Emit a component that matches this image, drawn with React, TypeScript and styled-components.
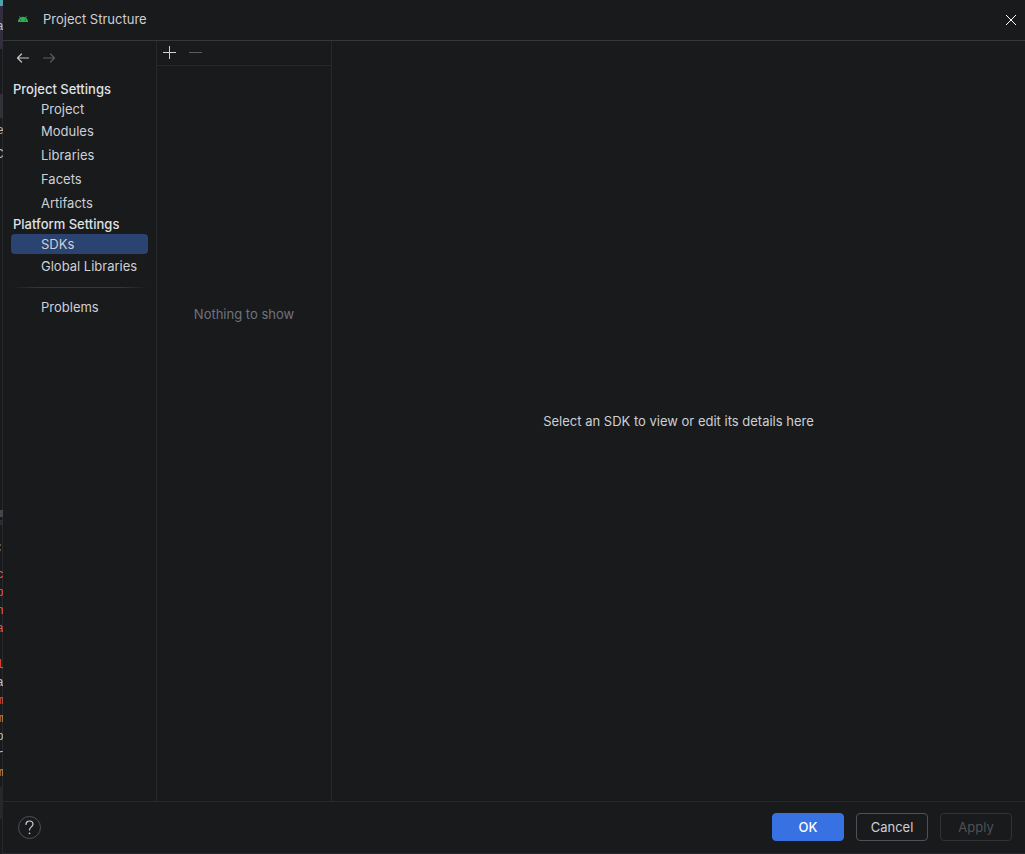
import React from "react";
import styled, { createGlobalStyle, css } from "styled-components";

const GlobalStyle = createGlobalStyle`
  * { box-sizing: border-box; }
  body {
    margin: 0;
    background: #191a1c;
    color: #ced0d6;
    font: 13px/16px Inter, "Liberation Sans", sans-serif;
  }
  button { font: inherit; color: inherit; margin: 0; }
`;

const Screen = styled.div`
  display: flex;
  height: 100vh;
  overflow: hidden;
`;

const Editor = styled.div`
  flex: none;
  display: flex;
  flex-direction: column;
  width: 3px;
  overflow: hidden;
  background: linear-gradient(90deg, #191a1c 2px, #26282b 2px);
  font: 13px/18px "Liberation Mono", monospace;
  text-indent: -4px;
`;

const Block = styled.div<{ $h: number; $bg?: string }>`
  flex: none;
  height: ${(p) => p.$h}px;
  background: ${(p) => p.$bg ?? "transparent"};
`;

const Code = styled.span<{ $color?: string; $bg?: string }>`
  flex: none;
  height: 18px;
  color: ${(p) => p.$color ?? "#bcbec4"};
  background: ${(p) => p.$bg ?? "transparent"};
`;

const Dialog = styled.main`
  flex: 1;
  min-width: 0;
  display: flex;
  flex-direction: column;
`;

const TitleBar = styled.header`
  display: flex;
  align-items: center;
  gap: 14px;
  height: 41px;
  padding: 0 8px 0 14px;
  border-bottom: 1px solid #36373a;
`;

const Title = styled.h1`
  flex: 1;
  margin: 0;
  padding-bottom: 2px;
  font-size: 13px;
  font-weight: 400;
`;

const IconButton = styled.button`
  display: flex;
  padding: 0;
  border: 0;
  background: none;
`;

const Body = styled.div`
  flex: 1;
  min-height: 0;
  display: flex;
`;

const Sidebar = styled.nav`
  width: 154px;
  border-right: 1px solid #27282b;
  padding: 9px 8px;
`;

const History = styled.div`
  display: flex;
  gap: 10px;
  padding: 0 4px 13px;
`;

const Group = styled.section`
  margin-bottom: -1px;
`;

const GroupTitle = styled.h2`
  margin: 0;
  padding-left: 2px;
  font-size: 13px;
  line-height: 20px;
  font-weight: 500;
  color: #dfe1e5;
`;

const NavItem = styled.a<{ $selected?: boolean; $compact?: boolean }>`
  display: flex;
  align-items: center;
  height: ${(p) => (p.$compact ? 20 : 24)}px;
  padding-left: 30px;
  border-radius: 4px;
  color: inherit;
  text-decoration: none;
  white-space: nowrap;
  ${(p) => p.$selected && css`background: #2a4371;`}
`;

const Divider = styled.hr`
  height: 1px;
  margin: 10px 0 7px;
  border: 0;
  background: linear-gradient(90deg, transparent, #36373a 20%, #36373a 80%, transparent);
`;

const SdkPanel = styled.section`
  display: flex;
  flex-direction: column;
  width: 175px;
  border-right: 1px solid #27282b;
`;

const Toolbar = styled.div`
  display: flex;
  align-items: center;
  gap: 10px;
  height: 25px;
  padding: 0 4px 2px;
  border-bottom: 1px solid #27282b;
`;

const EmptyList = styled.p`
  margin: 0;
  padding-top: 240px;
  text-align: center;
  color: #6f737a;
`;

const Details = styled.section`
  flex: 1;
  display: flex;
  align-items: center;
  justify-content: center;
`;

const Footer = styled.footer`
  display: flex;
  align-items: center;
  gap: 12px;
  height: 53px;
  padding: 0 13px 1px 15px;
  border-top: 1px solid #27282b;
  border-bottom: 1px solid #27282b;
`;

const HelpButton = styled.button`
  display: flex;
  align-items: center;
  justify-content: center;
  width: 23px;
  height: 23px;
  margin-right: auto;
  padding: 0;
  border: 1px solid #4e5157;
  border-radius: 50%;
  background: none;
`;

const Button = styled.button<{ $primary?: boolean }>`
  width: 72px;
  height: 28px;
  padding: 0;
  border: 1px solid #4e5157;
  border-radius: 4px;
  background: none;
  ${(p) => p.$primary && css`
    border-color: #3871e1;
    background: #3871e1;
    color: #fff;
    font-weight: 500;
  `}
  &:disabled { border-color: #303236; color: #4e5157; }
`;

const Arrow = ({ forward }: { forward?: boolean }) => (
  <svg width="16" height="16" fill="none" stroke={forward ? "#5a5c61" : "#c4c6cc"} strokeWidth="1.2" strokeLinecap="round" strokeLinejoin="round">
    <path d={forward ? "M2.5 8h11M9.5 4l4 4l-4 4" : "M13.5 8h-11M6.500 4l-4 4l4 4"} />
  </svg>
);

export default function App() {
  return (
    <Screen>
      <GlobalStyle />
      <Editor aria-hidden="true">
        <Block $h={6} $bg="#4fa3ad" />
        <Block $h={12} $bg="#332d40" />
        <Code $bg="#332d40">a</Code>
        <Block $h={13} $bg="#332d40" />
        <Block $h={45} />
        <Block $h={24} $bg="#303237" />
        <Block $h={4} />
        <Code>e</Code>
        <Block $h={6} />
        <Code>C</Code>
        <Block $h={346} />
        <Block $h={7} $bg="#43464a" />
        <Block $h={3} />
        <Block $h={5} $bg="#2b2d30" />
        <Block $h={14} />
        <Code $color="#6f737a">:</Code>
        <Block $h={9} />
        <Code $color="#e05545">c</Code>
        <Code $color="#e05545">p</Code>
        <Code $color="#e05545">n</Code>
        <Code $color="#e05545">a</Code>
        <Block $h={18} />
        <Code $color="#f04a35">l</Code>
        <Code>a</Code>
        <Code $color="#e05545">m</Code>
        <Code $color="#c78a4a">m</Code>
        <Code>p</Code>
        <Code>r</Code>
        <Code $color="#c78a4a">m</Code>
        <Block $h={5} />
        <Block $h={32} $bg="#27282b" />
      </Editor>
      <Dialog>
        <TitleBar>
          <svg width="12" height="12" viewBox="0 1 12 12">
            <path d="M1 9c0-2 .8-3.400 2-4.200L2.200 3.200l.6-.3.9 1.500a5 5 0 0 1 4.600 0l.9-1.500.6.3L9 4.800c1.200.8 2 2.200 2 4.200z" fill="#2fae55" />
            <circle cx="3.700" cy="7" r=".5" fill="#191a1c" />
            <circle cx="8.300" cy="7" r=".5" fill="#191a1c" />
          </svg>
          <Title>Project Structure</Title>
          <IconButton aria-label="Close">
            <svg width="12" height="12" stroke="#fff" shapeRendering="crispEdges">
              <path d="M1 1l10 10M11 1L1 11" />
            </svg>
          </IconButton>
        </TitleBar>
        <Body>
          <Sidebar>
            <History>
              <IconButton aria-label="Back"><Arrow /></IconButton>
              <IconButton aria-label="Forward" disabled><Arrow forward /></IconButton>
            </History>
            <Group>
              <GroupTitle>Project Settings</GroupTitle>
              <NavItem href="#project" $compact>Project</NavItem>
              <NavItem href="#modules">Modules</NavItem>
              <NavItem href="#libraries">Libraries</NavItem>
              <NavItem href="#facets">Facets</NavItem>
              <NavItem href="#artifacts">Artifacts</NavItem>
            </Group>
            <Group>
              <GroupTitle>Platform Settings</GroupTitle>
              <NavItem href="#sdks" $compact $selected>SDKs</NavItem>
              <NavItem href="#global">Global Libraries</NavItem>
            </Group>
            <Divider />
            <NavItem href="#problems">Problems</NavItem>
          </Sidebar>
          <SdkPanel>
            <Toolbar>
              <IconButton aria-label="Add SDK">
                <svg width="16" height="16" stroke="#ced0d6"><path d="M2 8.500h13M8.500 2v13" /></svg>
              </IconButton>
              <IconButton aria-label="Remove SDK" disabled>
                <svg width="16" height="16" stroke="#5a5c60"><path d="M2 8.500h13" /></svg>
              </IconButton>
            </Toolbar>
            <EmptyList>Nothing to show</EmptyList>
          </SdkPanel>
          <Details>Select an SDK to view or edit its details here</Details>
        </Body>
        <Footer>
          <HelpButton aria-label="Help">
            <svg width="15" height="15" fill="none" stroke="#ced0d6" strokeWidth="1.200" strokeLinecap="round">
              <path d="M4 4.400C4 2.400 5.500 1 7.500 1s3.500 1.300 3.500 3.200c0 2.600-3.500 2.800-3.500 5.800" />
              <circle cx="7.500" cy="13.300" r=".9" fill="#ced0d6" stroke="none" />
            </svg>
          </HelpButton>
          <Button $primary>OK</Button>
          <Button>Cancel</Button>
          <Button disabled>Apply</Button>
        </Footer>
      </Dialog>
    </Screen>
  );
}
